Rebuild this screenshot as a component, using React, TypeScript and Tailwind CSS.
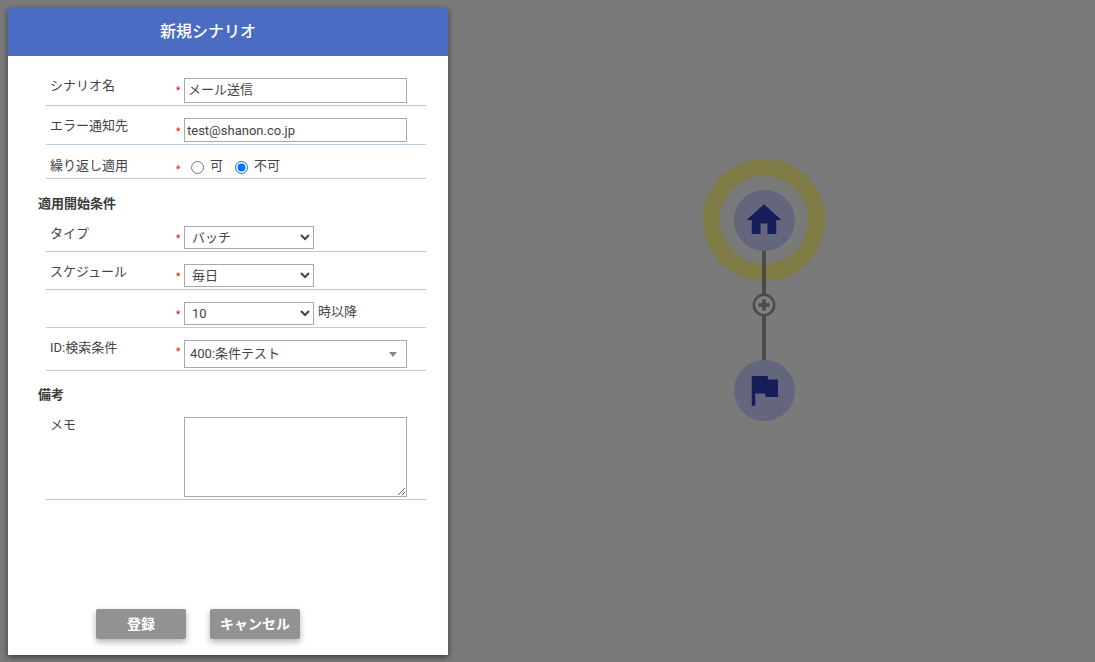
import type { ReactNode } from "react";
import { MdFlag, MdHome } from "react-icons/md";

function Row({ label, required, className, starTop = "pt-[5px]", children }: { label?: string; required?: boolean; className: string; starTop?: string; children: ReactNode }) {
  return (
    <div className={`flex border-b border-[#bccbdf] ${className}`}>
      <div className="w-[127px] shrink-0 pl-[4px] leading-[20px]">{label}</div>
      <div className={`w-[11px] shrink-0 pl-[3px] text-[10px] leading-[20px] text-[#f00000] ${starTop}`}>{required ? "*" : ""}</div>
      <div>{children}</div>
    </div>
  );
}

function Heading({ children, className }: { children: ReactNode; className: string }) {
  return <div className={`text-[13px] font-bold leading-[20px] text-[#3c3c3c] ${className}`}>{children}</div>;
}

export default function App() {
  const select = "block h-[23px] w-[130px] border border-[#a9a9a9] bg-white pl-[3px] text-[13px] text-[#444]";

  return (
    <div className="relative h-[662px] w-[1095px] overflow-hidden bg-[#7a7a7a] font-['Roboto','Noto_Sans_CJK_JP',sans-serif] text-[13px] text-[#444]">
      <div className="absolute left-[8px] top-[8px] flex h-[647px] w-[440px] flex-col bg-white shadow-[0_2px_6px_rgba(0,0,0,0.55)]">
        <div className="flex h-[48px] items-center justify-center bg-[#4a6cc3] pr-[40px] text-[16px] font-medium text-white">新規シナリオ</div>

        <div className="pl-[30px] pr-[22px]">
          <div className="ml-[8px] pt-[10px]">
            <Row label="シナリオ名" required className="h-[40px] pt-[10px]">
              <input readOnly value="メール送信" className="mt-[2px] block h-[25px] w-[223px] border border-[#a9a9a9] pb-[4px] pl-[3px] text-[13px] text-[#444]" />
            </Row>
            <Row label="エラー通知先" required starTop="pt-[6px]" className="h-[39px] pt-[10px]">
              <input readOnly value="test@shanon.co.jp" className="mt-[2px] block h-[24px] w-[223px] border border-[#a9a9a9] pl-[2px] text-[13px] text-[#444]" />
            </Row>
            <Row label="繰り返し適用" required starTop="pt-[4px]" className="h-[34px] pt-[11px]">
              <div className="flex h-[20px] items-center text-[13px]">
                <label className="ml-[7px] flex items-center">
                  <input type="radio" name="repeat" readOnly className="m-0 mt-[3px] size-[13px]" />
                  <span className="ml-[6px]">可</span>
                </label>
                <label className="ml-[12px] flex items-center">
                  <input type="radio" name="repeat" readOnly checked className="m-0 mt-[3px] size-[13px]" />
                  <span className="ml-[6px]">不可</span>
                </label>
              </div>
            </Row>
          </div>

          <Heading className="pt-[15px]">適用開始条件</Heading>

          <div className="ml-[8px]">
            <Row label="タイプ" required className="h-[38px] pt-[10px]">
              <select className={`${select} mt-[2px]`} defaultValue="バッチ">
                <option>バッチ</option>
              </select>
            </Row>
            <Row label="スケジュール" required className="h-[38px] pt-[10px]">
              <select className={`${select} mt-[2px]`} defaultValue="毎日">
                <option>毎日</option>
              </select>
            </Row>
            <Row required className="h-[38px] pt-[10px]">
              <div className="mt-[2px] flex items-center">
                <select className={select} defaultValue="10">
                  <option>10</option>
                </select>
                <span className="ml-[4px] -mt-[3px] text-[13px]">時以降</span>
              </div>
            </Row>
            <Row label="ID:検索条件" required starTop="pt-[4px]" className="h-[43px] pt-[10px]">
              <div className="mt-[2px] flex h-[28px] w-[223px] items-center justify-between border border-[#a9a9a9] pl-[5px] pr-[9px] text-[13px]">
                <span>400:条件テスト</span>
                <span className="h-0 w-0 border-x-[4px] border-t-[5px] border-x-transparent border-t-[#888]" />
              </div>
            </Row>
          </div>

          <Heading className="pt-[14px]">備考</Heading>

          <div className="ml-[8px]">
            <Row label="メモ" className="h-[95px] pt-[10px]">
              <textarea readOnly className="mt-[2px] block h-[80px] w-[223px] border border-[#a9a9a9]" />
            </Row>
          </div>
        </div>

        <div className="mt-auto flex gap-[24px] pb-[16px] pl-[88px]">
          <button className="h-[30px] w-[90px] rounded-[2px] bg-[#929292] text-[14px] font-bold text-white shadow-[0_3px_6px_rgba(0,0,0,0.3)]">登録</button>
          <button className="h-[30px] w-[90px] rounded-[2px] bg-[#929292] text-[14px] font-bold text-white shadow-[0_3px_6px_rgba(0,0,0,0.3)]">キャンセル</button>
        </div>
      </div>

      {/* scenario diagram, nodes sit on a free canvas */}
      <div className="absolute left-[703px] top-[159px] size-[122px] rounded-full border-[17px] border-[#7f7b45]" />
      <div className="absolute left-[762px] top-[249px] h-[112px] w-[4px] bg-[#4a4a4a]" />
      <div className="absolute left-[733.5px] top-[189.5px] flex size-[61px] items-center justify-center rounded-full bg-[#63667c] text-[#161d58]">
        <MdHome size={42} />
      </div>
      <div className="absolute left-[733.5px] top-[359.5px] flex size-[61px] items-center justify-center rounded-full bg-[#63667c] text-[#161d58]">
        <MdFlag size={42} />
      </div>
      <svg className="absolute left-[752px] top-[293px]" width="24" height="24" viewBox="0 0 24 24">
        <circle cx="12" cy="12" r="10.2" fill="#808080" stroke="#4a4a4a" strokeWidth="2.4" />
        <path d="M12 6.5v11M6.5 12h11" stroke="#4a4a4a" strokeWidth="3.4" />
      </svg>
    </div>
  );
}
